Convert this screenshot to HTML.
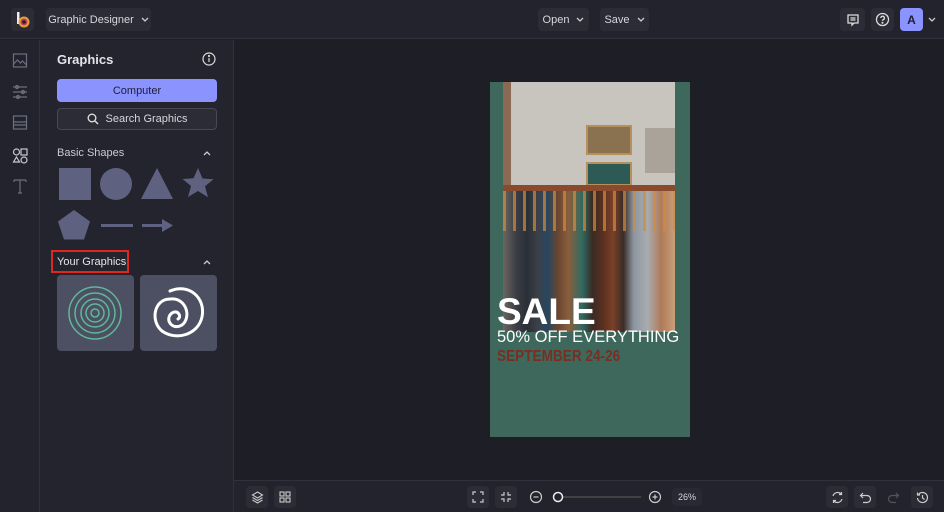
<!DOCTYPE html>
<html><head><style>
*{box-sizing:border-box;margin:0;padding:0}
body{width:944px;height:512px;overflow:hidden;background:#1d1e26;font-family:"Liberation Sans",sans-serif;color:#d8d9e0;position:relative}
.abs{position:absolute}
.btn{position:absolute;background:#2b2c36;border-radius:4px;color:#d6d7de;font-size:11px;display:flex;align-items:center;justify-content:center}
.shape{fill:#5f6180}
.chev{margin-left:7px}
</style></head><body>
<div class="abs" style="left:0;top:0;width:944px;height:39px;background:#22232c;border-bottom:1px solid #30313b"></div>
<div class="btn" style="left:11px;top:8px;width:23px;height:23px;background:#2b2c36">
<svg width="16" height="18" viewBox="0 0 16 18"><rect x="2" y="1" width="2.5" height="12" fill="#eee"/><circle cx="9" cy="11" r="5.5" fill="#e8a030"/><circle cx="9" cy="11" r="3.5" fill="#c23b6c"/><circle cx="9" cy="11" r="1.8" fill="#222"/></svg></div>
<div class="btn" style="left:46px;top:8px;width:105px;height:23px">Graphic Designer<svg class="chev" width="8" height="5" viewBox="0 0 8 5" fill="none" stroke="#ccc" stroke-width="1.3"><path d="M1 1l3 3 3-3"/></svg></div>
<div class="btn" style="left:538px;top:8px;width:51px;height:23px">Open<svg class="chev" width="8" height="5" viewBox="0 0 8 5" fill="none" stroke="#ccc" stroke-width="1.3"><path d="M1 1l3 3 3-3"/></svg></div>
<div class="btn" style="left:600px;top:8px;width:49px;height:23px">Save<svg class="chev" width="8" height="5" viewBox="0 0 8 5" fill="none" stroke="#ccc" stroke-width="1.3"><path d="M1 1l3 3 3-3"/></svg></div>
<div class="btn" style="left:840px;top:8px;width:25px;height:23px"><svg width="14" height="14" viewBox="0 0 14 14" fill="none" stroke="#ddd" stroke-width="1.3"><path d="M2 2h10v8H8l-2 2v-2H2z M4.5 5h5 M4.5 7h5"/></svg></div>
<div class="btn" style="left:871px;top:8px;width:23px;height:23px"><svg width="15" height="15" viewBox="0 0 15 15" fill="none" stroke="#ddd" stroke-width="1.3"><circle cx="7.5" cy="7.5" r="6"/><path d="M5.8 6a1.8 1.8 0 1 1 2.4 1.7c-.5.3-.7.6-.7 1.2"/><circle cx="7.5" cy="10.8" r=".4" fill="#ddd"/></svg></div>
<div class="btn" style="left:900px;top:8px;width:23px;height:23px;background:#8b93ff;color:#1c1e3a;font-size:12px;font-weight:bold">A</div>
<svg class="abs" style="left:928px;top:17px" width="8" height="5" viewBox="0 0 8 5" fill="none" stroke="#ccc" stroke-width="1.3"><path d="M1 1l3 3 3-3"/></svg>
<div class="abs" style="left:0;top:40px;width:40px;height:472px;background:#22232c;border-right:1px solid #30313b"></div>
<svg class="abs" style="left:12px;top:52px" width="16" height="150" viewBox="0 0 16 150" fill="none" stroke="#6d6f80" stroke-width="1.2">
<rect x="1.5" y="2" width="13" height="13"/><path d="M1.5 12l4-4 3 3 2-2 4 4"/>
<path d="M1 35h14M1 40h14M1 45h14"/><circle cx="5" cy="35" r="1.5"/><circle cx="11" cy="40" r="1.5"/><circle cx="6" cy="45" r="1.5"/>
<rect x="1.5" y="64" width="13" height="13"/><path d="M1.5 70h13M1.5 73h13"/>
<g stroke="#c8c9d6"><circle cx="4.5" cy="100" r="3"/><rect x="9" y="97" width="6" height="6"/><path d="M4.5 105l3 5h-6z"/><circle cx="12" cy="108" r="3"/></g>
<path d="M2 128h12M8 128v13M2 128v2M14 128v2M6 141h4"/>
</svg>
<div class="abs" style="left:40px;top:40px;width:194px;height:472px;background:#23242d;border-right:1px solid #30313b"></div>
<div class="abs" style="left:57px;top:52px;font-size:13px;font-weight:bold;color:#e4e5ec">Graphics</div>
<svg class="abs" style="left:202px;top:52px" width="14" height="14" viewBox="0 0 14 14" fill="none" stroke="#ddd" stroke-width="1.2"><circle cx="7" cy="7" r="6"/><path d="M7 6v4"/><circle cx="7" cy="4" r=".5" fill="#ddd"/></svg>
<div class="btn" style="left:57px;top:79px;width:160px;height:23px;background:#8b93ff;color:#1c1e3a">Computer</div>
<div class="btn" style="left:57px;top:108px;width:160px;height:22px;background:#2b2c36;border:1px solid #474856"><svg width="12" height="12" viewBox="0 0 12 12" fill="none" stroke="#ddd" stroke-width="1.4" style="margin-right:7px"><circle cx="5" cy="5" r="3.8"/><path d="M8 8l3 3"/></svg>Search Graphics</div>
<div class="abs" style="left:57px;top:147px;font-size:11px;color:#c9cad3">Basic Shapes</div>
<svg class="abs" style="left:203px;top:151px" width="8" height="5" viewBox="0 0 8 5" fill="none" stroke="#ccc" stroke-width="1.3"><path d="M1 4l3-3 3 3"/></svg>
<svg class="abs" style="left:57px;top:166px" width="160" height="76" viewBox="0 0 160 76">
<rect class="shape" x="2" y="2" width="32" height="32"/><circle class="shape" cx="59" cy="18" r="16"/>
<path class="shape" d="M100 2l16 31h-32z"/><path class="shape" d="M141 2l4.5 10.5 11 .8-8.5 7 3 11L141 25l-10 6 3-11-8.5-7 11-.8z"/>
<path class="shape" d="M17 44l16 11.5-6 18H7l-6-18z"/>
<rect class="shape" x="44" y="58" width="32" height="3"/><rect class="shape" x="85" y="58" width="23" height="3"/><path class="shape" d="M105 53l11 6.5-11 6.5z"/>
</svg>
<div class="abs" style="left:51px;top:250px;width:78px;height:23px;border:2.5px solid #e0261d"></div>
<div class="abs" style="left:57px;top:256px;font-size:11px;color:#e4e5ec">Your Graphics</div>
<svg class="abs" style="left:203px;top:260px" width="8" height="5" viewBox="0 0 8 5" fill="none" stroke="#ccc" stroke-width="1.3"><path d="M1 4l3-3 3 3"/></svg>
<div class="abs" style="left:57px;top:275px;width:77px;height:76px;background:#4d4f62;border-radius:4px"></div>
<svg class="abs" style="left:57px;top:275px" width="77" height="76" viewBox="0 0 77 76" fill="none" stroke="#5fb899" stroke-width="1.5"><circle cx="38" cy="38" r="26"/><circle cx="38" cy="38" r="20"/><circle cx="38" cy="38" r="14"/><circle cx="38" cy="38" r="9"/><circle cx="38" cy="38" r="4"/></svg>
<div class="abs" style="left:140px;top:275px;width:77px;height:76px;background:#4d4f62;border-radius:4px"></div>
<svg class="abs" style="left:140px;top:275px" width="77" height="76" viewBox="0 0 77 76" fill="none" stroke="#fff" stroke-width="3" stroke-linecap="round"><path d="M30 16C48 8 66 22 62 42 58 60 36 66 22 56 10 46 14 24 30 24 46 22 52 42 42 50 32 56 24 44 32 38 38 34 42 42 38 44"/></svg>
<!-- canvas -->
<div class="abs" style="left:490px;top:82px;width:200px;height:355px;background:#3e685c"></div>
<div class="abs" style="left:503px;top:82px;width:172px;height:105px;background:#c8c5bf"></div>
<div class="abs" style="left:503px;top:82px;width:8px;height:105px;background:#8a6a52"></div>
<div class="abs" style="left:586px;top:125px;width:46px;height:30px;background:#8a7250;border:2px solid #b58f5e"></div>
<div class="abs" style="left:586px;top:162px;width:46px;height:24px;background:#2d5a55;border:2px solid #b58f5e"></div>
<div class="abs" style="left:645px;top:128px;width:30px;height:45px;background:#a9a39a"></div>
<div class="abs" style="left:503px;top:185px;width:172px;height:6px;background:#8a4a2e"></div>
<div class="abs" style="left:503px;top:191px;width:172px;height:141px;background:linear-gradient(90deg,#6b6560 0,#3a3c44 8%,#2a3038 14%,#3c4048 20%,#274660 26%,#6a4530 32%,#8a5e3c 38%,#2f6a62 46%,#3a2a24 52%,#5a3020 58%,#7a4028 64%,#3a2c28 70%,#8d96a0 76%,#a8acb0 84%,#b07a58 92%,#c8a07a 100%)"></div>
<div class="abs" style="left:503px;top:191px;width:172px;height:40px;background:repeating-linear-gradient(90deg,rgba(210,140,60,.7) 0 3px,transparent 3px 10px)"></div>
<div class="abs" style="left:497px;top:292px;font-size:37px;font-weight:bold;color:#fff;line-height:40px">SALE</div>
<div class="abs" style="left:497px;top:327px;font-size:16.5px;color:#fff;line-height:20px;white-space:nowrap">50% OFF EVERYTHING</div>
<div class="abs" style="left:497px;top:348px;font-size:16px;font-weight:bold;color:#7a2e22;line-height:18px;transform:scaleX(.85);transform-origin:left;white-space:nowrap">SEPTEMBER 24-26</div>
<!-- bottom bar -->
<div class="abs" style="left:234px;top:480px;width:710px;height:32px;background:#22232c;border-top:1px solid #30313b"></div>
<div class="btn" style="left:246px;top:486px;width:22px;height:22px"><svg width="13" height="13" viewBox="0 0 13 13" fill="none" stroke="#ccc" stroke-width="1.1"><path d="M6.5 1l5 3-5 3-5-3z M1.5 6.5l5 3 5-3 M1.5 9l5 3 5-3"/></svg></div>
<div class="btn" style="left:274px;top:486px;width:22px;height:22px"><svg width="12" height="12" viewBox="0 0 12 12" fill="none" stroke="#ccc" stroke-width="1.1"><rect x="1" y="1" width="4" height="4"/><rect x="7" y="1" width="4" height="4"/><rect x="1" y="7" width="4" height="4"/><rect x="7" y="7" width="4" height="4"/></svg></div>
<div class="btn" style="left:467px;top:486px;width:22px;height:22px"><svg width="12" height="12" viewBox="0 0 12 12" fill="none" stroke="#ccc" stroke-width="1.2"><path d="M1 4V1h3M8 1h3v3M11 8v3H8M4 11H1V8"/></svg></div>
<div class="btn" style="left:495px;top:486px;width:22px;height:22px"><svg width="12" height="12" viewBox="0 0 12 12" fill="none" stroke="#ccc" stroke-width="1.2"><path d="M1 4h3V1M8 1v3h3M11 8H8v3M4 11V8H1"/></svg></div>
<svg class="abs" style="left:528px;top:490px" width="135" height="14" viewBox="0 0 135 14" fill="none" stroke="#ccc" stroke-width="1.2"><circle cx="8" cy="7" r="5.5"/><path d="M5.5 7h5"/><line x1="30" y1="7" x2="113" y2="7" stroke="#555"/><circle cx="30" cy="7" r="4.5" fill="#22232c" stroke="#eee" stroke-width="1.5"/><circle cx="127" cy="7" r="5.5"/><path d="M124.5 7h5M127 4.5v5"/></svg>
<div class="btn" style="left:672px;top:488px;width:30px;height:18px;font-size:9px;background:#282933">26%</div>
<div class="btn" style="left:826px;top:486px;width:22px;height:22px"><svg width="13" height="13" viewBox="0 0 13 13" fill="none" stroke="#ccc" stroke-width="1.2"><path d="M2 5a4.8 4.8 0 0 1 8.5-1.5M11 8a4.8 4.8 0 0 1-8.5 1.5M10.5 1v2.5H8M2.5 12V9.5H5"/></svg></div>
<div class="btn" style="left:854px;top:486px;width:22px;height:22px"><svg width="13" height="13" viewBox="0 0 13 13" fill="none" stroke="#ccc" stroke-width="1.2"><path d="M4 2L1.5 4.5 4 7M1.5 4.5H8a3.5 3.5 0 0 1 0 7H4"/></svg></div>
<div class="btn" style="left:882px;top:486px;width:22px;height:22px;background:#22232c"><svg width="13" height="13" viewBox="0 0 13 13" fill="none" stroke="#555" stroke-width="1.2"><path d="M9 2l2.5 2.5L9 7M11.5 4.5H5a3.5 3.5 0 0 0 0 7h4"/></svg></div>
<div class="btn" style="left:911px;top:486px;width:22px;height:22px"><svg width="13" height="13" viewBox="0 0 13 13" fill="none" stroke="#ccc" stroke-width="1.2"><path d="M2.5 3.5A5 5 0 1 1 1.5 7M1.5 1.5v2.5H4M6.5 4v3l2 1.5"/></svg></div>
</body></html>
